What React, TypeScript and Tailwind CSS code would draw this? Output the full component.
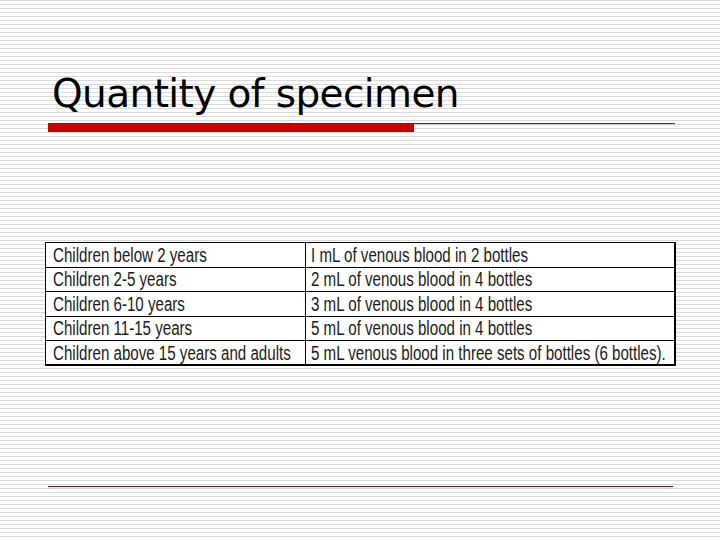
import React from 'react';

const rows: [string, string][] = [
  ['Children below 2 years', 'I mL of venous blood in 2 bottles'],
  ['Children 2-5 years', '2 mL of venous blood in 4 bottles'],
  ['Children 6-10 years', '3 mL of venous blood in 4 bottles'],
  ['Children 11-15 years', '5 mL of venous blood in 4 bottles'],
  ['Children above 15 years and adults', '5 mL venous blood in three sets of bottles (6 bottles).'],
];

export default function App() {
  return (
    <div className="w-[720px] h-[540px] overflow-hidden bg-white bg-[repeating-linear-gradient(to_bottom,#dadada_0px,#dadada_1px,#ffffff_1px,#ffffff_4px)] flex flex-col">
      {/* Title */}
      <h1 className="pl-[52px] pt-[74px] text-[39px] leading-none text-black font-['DejaVu_Sans','Liberation_Sans',sans-serif] tracking-[-0.6px]">
        Quantity of specimen
      </h1>

      {/* Rule under title */}
      <div className="mt-[10px] pl-[48px] flex items-start">
        <div className="w-[366px] h-[9px] bg-[#cc0000]" />
        <div className="w-[261px] h-px bg-[#7a2536] shadow-[0_1px_2px_rgba(220,120,120,0.4)]" />
      </div>

      {/* Table */}
      <div className="mt-[110px] pl-[45px]">
        <table className="w-[631px] table-fixed border-collapse bg-white border-r-2 border-b-2 border-black text-[19.5px] leading-none text-[#1a1a1a] font-['Liberation_Sans','Arial',sans-serif]">
          <tbody>
            {rows.map(([a, b], i) => (
              <tr key={i} className="h-[24.6px]">
                <td className="w-[260px] border border-black pl-[7px] pt-[1px] whitespace-nowrap overflow-hidden">
                  <span className="inline-block origin-left scale-x-[0.775]">{a}</span>
                </td>
                <td className="border border-black pl-[5px] pt-[1px] whitespace-nowrap overflow-hidden">
                  <span className="inline-block origin-left scale-x-[0.775]">{b}</span>
                </td>
              </tr>
            ))}
          </tbody>
        </table>
      </div>

      {/* Bottom rule */}
      <div className="mt-[120px] ml-[48px] w-[625px] h-px bg-[#4a2030] shadow-[0_1px_2px_rgba(220,120,120,0.35)]" />
    </div>
  );
}
